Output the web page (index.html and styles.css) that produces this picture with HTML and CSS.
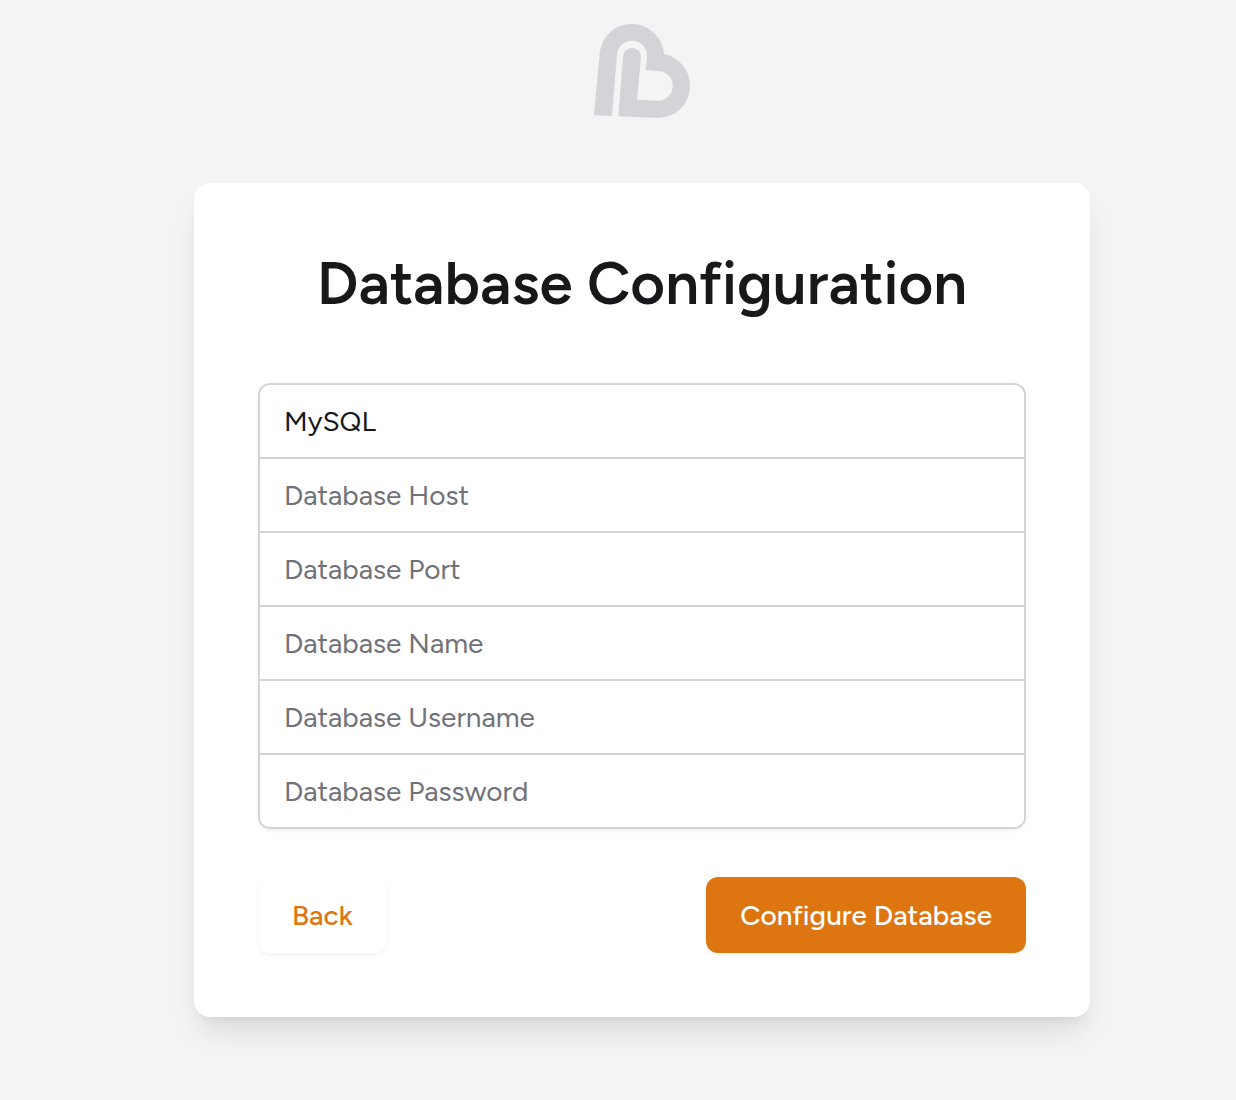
FILE: index.html
```html
<!DOCTYPE html>
<html lang="en">
<head>
<meta charset="utf-8">
<meta name="viewport" content="width=device-width, initial-scale=1">
<title>Database Configuration</title>
<link rel="stylesheet" href="styles.css">
</head>
<body>
<main class="page">
  <svg class="logo" viewBox="36 30 288 282" aria-hidden="true">
    <path d="M36 304L53 117A97 97 0 0 1 150 30A97 97 0 0 1 246 120A96 96 0 0 1 324 215A96 96 0 0 1 228 312L109 307L123 128A27 27 0 0 1 177 130L165 257L228 260A44 44 0 0 0 272 215A44 44 0 0 0 230 171L191 168L195 129A45 45 0 0 0 105 122L90 306Z"/>
  </svg>
  <form class="card">
    <h1 class="title">Database Configuration</h1>
    <div class="fields">
      <select class="field" aria-label="Database type"><option>MySQL</option></select>
      <input class="field" type="text" aria-label="Database Host" placeholder="Database Host">
      <input class="field" type="text" aria-label="Database Port" placeholder="Database Port">
      <input class="field" type="text" aria-label="Database Name" placeholder="Database Name">
      <input class="field" type="text" aria-label="Database Username" placeholder="Database Username">
      <input class="field" type="password" aria-label="Database Password" placeholder="Database Password">
    </div>
    <div class="actions">
      <button class="button" type="button">Back</button>
      <button class="button button-primary" type="submit">Configure Database</button>
    </div>
  </form>
</main>
</body>
</html>
```
FILE: styles.css
```css
* {
  box-sizing: border-box;
}

body {
  margin: 0;
  background: #f4f4f4;
  color: #18181b;
  font-family: Figtree, Lato, sans-serif;
  font-size: 28px;
  line-height: 40px;
}

.page {
  display: flex;
  flex-direction: column;
  align-items: center;
  gap: 65px;
  padding: 24px 0 64px 48px;
}

.logo {
  width: 96px;
  height: 94px;
  fill: #d4d4d8;
}

.card {
  width: 100%;
  max-width: 896px;
  padding: 64px;
  border-radius: 16px;
  background: #fff;
  box-shadow: 0 20px 30px -6px rgb(0 0 0 / 10%), 0 8px 12px -8px rgb(0 0 0 / 10%);
}

.title {
  margin: 0 0 64px;
  font-size: 60px;
  font-weight: 600;
  line-height: 72px;
  text-align: center;
}

.fields {
  display: flex;
  flex-direction: column;
  overflow: hidden;
  border: 2px solid #d4d4d8;
  border-radius: 12px;
  box-shadow: 0 2px 4px rgb(0 0 0 / 5%);
}

.field {
  appearance: none;
  width: 100%;
  height: 74px;
  margin: 0;
  padding: 0 24px;
  border: 0;
  border-bottom: 2px solid #d4d4d8;
  border-radius: 0;
  background: #fff;
  color: #18181b;
  font: inherit;
}

.field:last-child {
  height: 72px;
  border-bottom: 0;
}

.field::placeholder {
  color: #71717a;
  opacity: 1;
}

.actions {
  display: flex;
  justify-content: space-between;
  margin-top: 48px;
}

.button {
  padding: 18px 34px;
  border: 0;
  border-radius: 12px;
  background: #fff;
  box-shadow: 0 2px 4px rgb(0 0 0 / 5%);
  color: #dd7611;
  font: inherit;
  font-weight: 500;
}

.button-primary {
  background: #dd7611;
  color: #fff;
}
```
